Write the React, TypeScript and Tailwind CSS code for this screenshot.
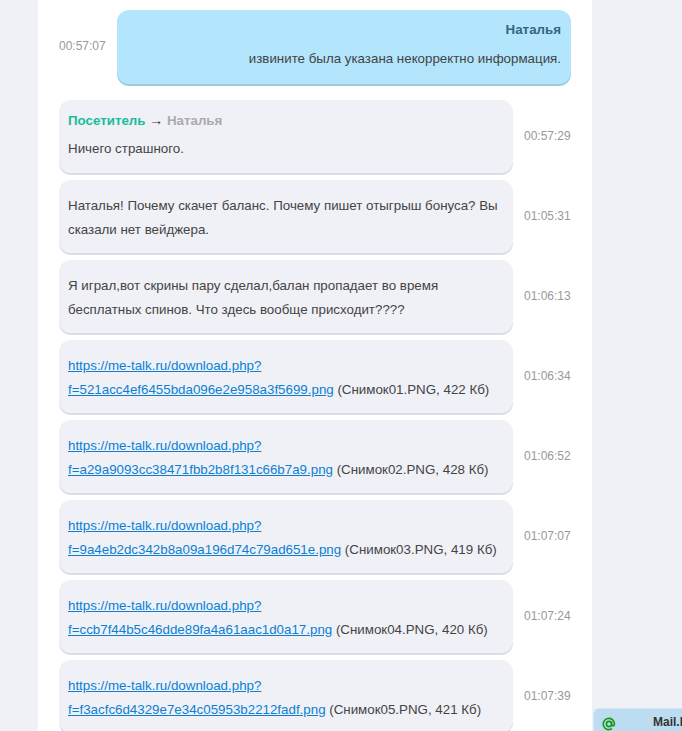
const rows = [
  { time: '01:05:31', text: 'Наталья! Почему скачет баланс. Почему пишет отыгрыш бонуса? Вы сказали нет вейджера.' },
  { time: '01:06:13', text: 'Я играл,вот скрины пару сделал,балан пропадает во время бесплатных спинов. Что здесь вообще присходит????' },
  { time: '01:06:34', url: 'https://me-talk.ru/download.php?f=521acc4ef6455bda096e2e958a3f5699.png', file: '(Снимок01.PNG, 422 Кб)' },
  { time: '01:06:52', url: 'https://me-talk.ru/download.php?f=a29a9093cc38471fbb2b8f131c66b7a9.png', file: '(Снимок02.PNG, 428 Кб)' },
  { time: '01:07:07', url: 'https://me-talk.ru/download.php?f=9a4eb2dc342b8a09a196d74c79ad651e.png', file: '(Снимок03.PNG, 419 Кб)' },
  { time: '01:07:24', url: 'https://me-talk.ru/download.php?f=ccb7f44b5c46dde89fa4a61aac1d0a17.png', file: '(Снимок04.PNG, 420 Кб)' },
  { time: '01:07:39', url: 'https://me-talk.ru/download.php?f=f3acfc6d4329e7e34c05953b2212fadf.png', file: '(Снимок05.PNG, 421 Кб)' },
];

function Time({ value }: { value: string }) {
  return <span className="text-xs text-[#999] leading-6 w-[47px] flex-shrink-0 pb-[2px]">{value}</span>;
}

function Bubble({ children }: { children: React.ReactNode }) {
  return (
    <div className="w-[454px] flex-shrink-0 bg-[#f0f1f7] rounded-xl shadow-[0_2px_0_#d9dcea] px-[9px] pt-[14px] pb-[11px] leading-6">
      {children}
    </div>
  );
}

export default function App() {
  return (
    <div className="relative h-screen overflow-hidden bg-[#f0f1f7] font-['Liberation_Sans',sans-serif] text-[13.33px] text-[#444]">
      <div className="ml-[38px] w-[554px] h-full bg-white px-[21px] pt-[10px] flex flex-col">
        <div className="flex items-center justify-between mb-[16px] flex-shrink-0">
          <Time value="00:57:07" />
          <div className="w-[454px] bg-[#b3e5fc] rounded-xl shadow-[0_2px_0_#9ccbe0] px-[10px] pt-[8px] text-right leading-6 h-[74px]">
            <p className="font-bold text-[#35657f] mb-[5px]">Наталья</p>
            <p>извините была указана некорректно информация.</p>
          </div>
        </div>

        <div className="flex items-center justify-between mb-[7px] flex-shrink-0">
          <Bubble>
            <p className="font-bold -mt-[5px] mb-[4px] text-[#aaa]">
              <span className="text-[#1abc9c]">Посетитель</span> <span className="font-normal text-[14px] leading-none text-[#333]">→</span> Наталья
            </p>
            <p className="mb-[1px]">Ничего страшного.</p>
          </Bubble>
          <Time value="00:57:29" />
        </div>

        {rows.map(r => (
          <div key={r.time} className="flex items-center justify-between mb-[7px] flex-shrink-0">
            <Bubble>
              {r.url ? (
                <p>
                  <a href="#" className="text-[#0b7fd4] underline">{r.url}</a> {r.file}
                </p>
              ) : (
                <p>{r.text}</p>
              )}
            </Bubble>
            <Time value={r.time} />
          </div>
        ))}
      </div>

      <div className="absolute left-[593px] top-[708px] w-[120px] h-[26px] bg-[#bcdcf2] rounded-tl-md border-t border-l border-[#d7e6f2] flex items-center pl-[8px]">
        <svg className="w-[14px] h-[14px] mt-[4px] mr-[37px] flex-shrink-0" viewBox="0 0 14 14" fill="none" stroke="#149a14" strokeWidth="1.6">
          <circle cx="7" cy="7" r="2.6" />
          <path d="M9.6 4.4v3.4c0 1.6 2.9 1.6 2.9-.8A5.6 5.6 0 1 0 10 11.7" />
        </svg>
        <span className="text-xs font-bold text-[#333]">Mail.Ru</span>
      </div>
    </div>
  );
}
